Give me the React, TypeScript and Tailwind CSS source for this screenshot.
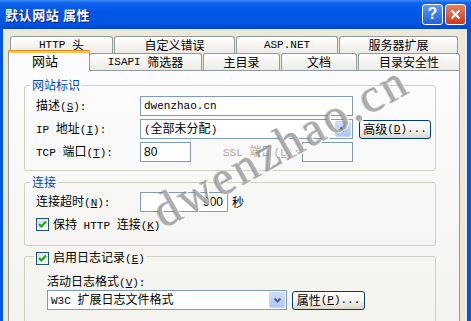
import React from "react";

type Seg = { t: string; a: boolean; u: boolean };
function segs(s: string): Seg[] {
  const out: Seg[] = [];
  let u = false;
  for (const ch of s) {
    if (ch === "&") {
      u = true;
      continue;
    }
    const a = ch.charCodeAt(0) < 128;
    const last = out[out.length - 1];
    if (!u && last && last.a === a && !last.u) last.t += ch;
    else out.push({ t: ch, a, u });
    u = false;
  }
  return out;
}

function Tx({ s }: { s: string }) {
  return (
    <>
      {segs(s).map((g, i) => (
        <span
          key={i}
          className={
            g.a
              ? g.u
                ? "font-['Liberation_Mono'] text-[11px] whitespace-pre underline underline-offset-[1px]"
                : "font-['Liberation_Mono'] text-[11px] whitespace-pre"
              : g.u
              ? "underline"
              : ""
          }
        >
          {g.t}
        </span>
      ))}
    </>
  );
}

function Check() {
  return (
    <div className="w-[13px] h-[13px] border border-[#1C5180] bg-linear-to-br from-[#DCDCD7] to-white flex items-center justify-center shrink-0">
      <svg width="11" height="11" viewBox="0 0 11 11">
        <polyline points="2,5 4.3,7.5 9,2.6" fill="none" stroke="#21A121" strokeWidth="2.2" />
      </svg>
    </div>
  );
}

function DropBtn() {
  return (
    <div className="w-[16px] h-[16px] mr-[1px] rounded-[2px] border border-[#C3D3FD] bg-linear-to-b from-[#CFDDFC] to-[#AFC6F5] flex items-center justify-center">
      <svg width="9" height="7" viewBox="0 0 9 7">
        <polyline points="1.5,1.5 4.5,4.5 7.5,1.5" fill="none" stroke="#4D6185" strokeWidth="2" />
      </svg>
    </div>
  );
}

export default function App() {
  return (
    <div className="relative w-[471px] h-[321px] overflow-hidden bg-[#0055E5] font-['Noto_Sans_CJK_SC','Liberation_Sans',sans-serif] text-[12px] leading-[14px] text-black">
      {/* Title bar */}
      <div className="h-[29px] flex items-center justify-between pl-[5px] pr-[5px] bg-[linear-gradient(180deg,#3C8DF7_0%,#0F63EC_10%,#0058E6_40%,#0055E2_80%,#0047CC_100%)]">
        <div className="text-white font-bold text-[13px] tracking-[0.6px] [text-shadow:1px_1px_0_#0A1883]">
          默认网站 属性
        </div>
        <div className="flex gap-[2px] mt-[-1px]">
          <div className="w-[21px] h-[21px] rounded-[3px] border border-white bg-linear-to-b from-[#5A9AFA] to-[#1F5FE0] flex items-center justify-center text-white font-bold text-[16px] font-['Liberation_Sans']">
            ?
          </div>
          <div className="w-[21px] h-[21px] rounded-[3px] border border-white bg-linear-to-b from-[#E9805F] to-[#C93A1B] flex items-center justify-center">
            <svg width="13" height="13" viewBox="0 0 13 13">
              <line x1="2.5" y1="2.5" x2="10.5" y2="10.5" stroke="white" strokeWidth="2.2" />
              <line x1="10.5" y1="2.5" x2="2.5" y2="10.5" stroke="white" strokeWidth="2.2" />
            </svg>
          </div>
        </div>
      </div>

      {/* Body */}
      <div className="ml-[3px] mr-[4px] h-[292px] bg-[#ECE9D8] pt-[7px]">
        {/* Tab row 1 */}
        <div className="flex gap-[1px] ml-[7px] h-[17px]">
          <div className="w-[103px] h-[17px] border border-b-0 border-[#919B9C] rounded-t-[3px] bg-linear-to-b from-white to-[#ECEBE6] flex items-center justify-center">
            <Tx s="HTTP 头" />
          </div>
          <div className="w-[121px] h-[17px] border border-b-0 border-[#919B9C] rounded-t-[3px] bg-linear-to-b from-white to-[#ECEBE6] flex items-center justify-center">
            自定义错误
          </div>
          <div className="w-[102px] h-[17px] border border-b-0 border-[#919B9C] rounded-t-[3px] bg-linear-to-b from-white to-[#ECEBE6] flex items-center justify-center">
            <Tx s="ASP.NET" />
          </div>
          <div className="w-[119px] h-[17px] border border-b-0 border-[#919B9C] rounded-t-[3px] bg-linear-to-b from-white to-[#ECEBE6] flex items-center justify-center">
            服务器扩展
          </div>
        </div>
        {/* Tab row 2 */}
        <div className="flex ml-[5px] mt-[-3px] h-[21px] items-start">
          <div className="relative z-10 w-[82px] h-[21px] border-x border-[#919B9C] rounded-t-[3px] bg-[#FCFCFE] flex flex-col">
            <div className="h-[1px] bg-[#E68B2C] rounded-t-[3px] mx-[-1px]" />
            <div className="h-[2px] bg-[#FFC73C]" />
            <div className="flex-1 flex items-center justify-center pr-[8px] pb-[2px] text-[13px]">网站</div>
          </div>
          <div className="ml-[-1px] mt-[3px] w-[113px] h-[17px] border border-b-0 border-[#919B9C] rounded-t-[3px] bg-linear-to-b from-white to-[#ECEBE6] flex items-center justify-center">
            <Tx s="ISAPI 筛选器" />
          </div>
          <div className="ml-[1px] mt-[3px] w-[77px] h-[17px] border border-b-0 border-[#919B9C] rounded-t-[3px] bg-linear-to-b from-white to-[#ECEBE6] flex items-center justify-center">
            主目录
          </div>
          <div className="ml-[1px] mt-[3px] w-[76px] h-[17px] border border-b-0 border-[#919B9C] rounded-t-[3px] bg-linear-to-b from-white to-[#ECEBE6] flex items-center justify-center">
            文档
          </div>
          <div className="ml-[1px] mt-[3px] w-[102px] h-[17px] border border-b-0 border-[#919B9C] rounded-t-[3px] bg-linear-to-b from-white to-[#ECEBE6] flex items-center justify-center">
            目录安全性
          </div>
        </div>

        {/* Panel */}
        <div className="ml-[5px] mt-[-1px] w-[452px] h-[270px] border border-[#919B9C] bg-linear-to-b from-[#FCFCFE] to-[#F3F2ED] pl-[15px] pt-[7px]">
          {/* Group 1 */}
          <fieldset className="w-[412px] border border-[#D0D0BF] rounded-[3px] pb-[8px]">
            <legend className="ml-[5px] px-[2px] text-[#0046D5] leading-[14px]">网站标识</legend>
            <div className="flex items-center h-[20px] mt-[4px] pl-[11px]">
              <div className="w-[104px]">
                <Tx s="描述(&S):" />
              </div>
              <div className="w-[213px] h-[20px] border border-[#7F9DB9] bg-white flex items-center pl-[3px]">
                <Tx s="dwenzhao.cn" />
              </div>
            </div>
            <div className="flex items-center h-[20px] mt-[3px] pl-[11px]">
              <div className="w-[104px]">
                <Tx s="IP 地址(&I):" />
              </div>
              <div className="w-[213px] h-[20px] border border-[#7F9DB9] bg-white flex items-center justify-between pl-[3px]">
                <span>
                  <Tx s="(全部未分配)" />
                </span>
                <DropBtn />
              </div>
              <div className="ml-[6px] w-[72px] h-[19px] border border-[#003C74] rounded-[3px] bg-linear-to-b from-white via-[#F4F3EE] to-[#DCD8CB] flex items-center justify-center">
                <Tx s="高级(&D)..." />
              </div>
            </div>
            <div className="flex items-center h-[20px] mt-[3px] pl-[11px]">
              <div className="w-[104px]">
                <Tx s="TCP 端口(&T):" />
              </div>
              <div className="w-[51px] h-[20px] border border-[#7F9DB9] bg-white flex items-center pl-[3px] font-['Liberation_Sans'] text-[12px]">
                80
              </div>
              <div className="ml-[32px] w-[79px] text-[#ACA899]">
                <Tx s="SSL 端口(&L):" />
              </div>
              <div className="w-[51px] h-[20px] border border-[#7F9DB9]" />
            </div>
          </fieldset>

          {/* Group 2 */}
          <fieldset className="mt-[4px] w-[412px] border border-[#D0D0BF] rounded-[3px] pb-[14px]">
            <legend className="ml-[5px] px-[2px] text-[#0046D5] leading-[14px]">连接</legend>
            <div className="flex items-center h-[20px] mt-[3px] pl-[11px]">
              <div className="w-[104px]">
                <Tx s="连接超时(&N):" />
              </div>
              <div className="w-[88px] h-[20px] border border-[#7F9DB9] bg-white flex items-center justify-end pr-[4px] font-['Liberation_Sans'] text-[12px]">
                900
              </div>
              <div className="ml-[4px]">秒</div>
            </div>
            <div className="flex items-center h-[13px] mt-[6px] pl-[11px]">
              <Check />
              <div className="ml-[4px]">
                <Tx s="保持 HTTP 连接(&K)" />
              </div>
            </div>
          </fieldset>

          {/* Group 3 */}
          <fieldset className="w-[412px] border border-[#D0D0BF] rounded-[3px] pb-[14px]">
            <legend className="ml-[9px] px-[2px] pt-[4px] leading-[14px]">
              <div className="flex items-center">
                <Check />
                <div className="ml-[4px]">
                  <Tx s="启用日志记录(&E)" />
                </div>
              </div>
            </legend>
            <div className="mt-[8px] pl-[22px] h-[14px]">
              <Tx s="活动日志格式(&V):" />
            </div>
            <div className="flex items-center h-[20px] mt-[2px] pl-[22px]">
              <div className="w-[240px] h-[20px] border border-[#7F9DB9] bg-white flex items-center justify-between pl-[3px]">
                <span>
                  <Tx s="W3C 扩展日志文件格式" />
                </span>
                <DropBtn />
              </div>
              <div className="ml-[5px] w-[73px] h-[19px] border border-[#003C74] rounded-[3px] bg-linear-to-b from-white via-[#F4F3EE] to-[#DCD8CB] flex items-center justify-center">
                <Tx s="属性(&P)..." />
              </div>
            </div>
          </fieldset>
        </div>
      </div>

      {/* Watermark */}
      <div className="absolute left-[281px] top-[146px] -translate-x-1/2 -translate-y-1/2 rotate-[-29deg] pointer-events-none whitespace-nowrap font-['Liberation_Serif',serif] text-[48px] leading-[48px] tracking-[3px] text-[#8E8E8E]/70 [text-shadow:1px_1px_0_rgba(255,255,255,0.9),-1px_-1px_0_rgba(90,90,90,0.35)]">
        dwenzhao.cn
      </div>
    </div>
  );
}
